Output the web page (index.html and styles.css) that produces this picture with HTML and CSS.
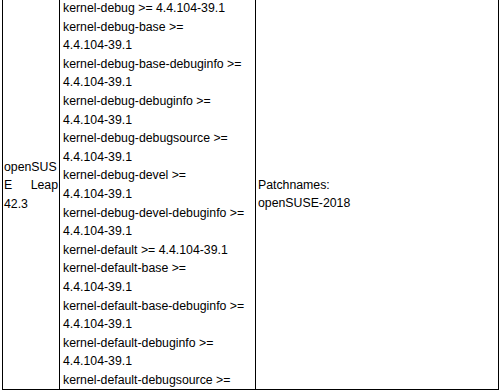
FILE: index.html
```html
<!DOCTYPE html>
<html lang="en">
<head>
<meta charset="utf-8">
<title>Packages</title>
<link rel="stylesheet" href="styles.css">
</head>
<body>
<div class="sheet">
  <div class="cell product"><div class="product-text">openSUSE Leap 42.3</div></div>
  <div class="cell packages">
    <div class="pkg">kernel-debug &gt;= <span class="ver">4.4.104-39.1</span></div>
    <div class="pkg">kernel-debug-base &gt;= <span class="ver">4.4.104-39.1</span></div>
    <div class="pkg">kernel-debug-base-debuginfo &gt;= <span class="ver">4.4.104-39.1</span></div>
    <div class="pkg">kernel-debug-debuginfo &gt;= <span class="ver">4.4.104-39.1</span></div>
    <div class="pkg">kernel-debug-debugsource &gt;= <span class="ver">4.4.104-39.1</span></div>
    <div class="pkg">kernel-debug-devel &gt;= <span class="ver">4.4.104-39.1</span></div>
    <div class="pkg">kernel-debug-devel-debuginfo &gt;= <span class="ver">4.4.104-39.1</span></div>
    <div class="pkg">kernel-default &gt;= <span class="ver">4.4.104-39.1</span></div>
    <div class="pkg">kernel-default-base &gt;= <span class="ver">4.4.104-39.1</span></div>
    <div class="pkg">kernel-default-base-debuginfo &gt;= <span class="ver">4.4.104-39.1</span></div>
    <div class="pkg">kernel-default-debuginfo &gt;= <span class="ver">4.4.104-39.1</span></div>
    <div class="pkg">kernel-default-debugsource &gt;=</div>
  </div>
  <div class="cell patches"><div>Patchnames:<br>openSUSE-2018</div></div>
</div>
</body>
</html>
```

FILE: styles.css
```css
html, body {
  margin: 0;
  padding: 0;
  background: #fff;
  overflow: hidden;
}

body {
  font-family: "Liberation Sans", Arial, sans-serif;
  font-size: 12.3px;
  line-height: 18.6px;
  color: #000;
}

.sheet {
  display: grid;
  grid-template-columns: 57px 196px 243px;
  width: 497px;
  margin: -2px 0 0 2px;
  border-left: 1px solid #000;
  border-top: 1px solid #000;
  box-sizing: border-box;
}

.cell {
  display: flex;
  align-items: center;
  border-right: 1px solid #000;
  border-bottom: 1px solid #000;
  box-sizing: border-box;
  min-width: 0;
}

.product {
  padding: 0 1px 17px 1px;
}

.product-text {
  width: 100%;
  text-align: justify;
  overflow-wrap: anywhere;
}

.packages {
  display: block;
  padding: 0 2px 0 3px;
}

.ver {
  white-space: nowrap;
}

.patches {
  padding: 0 2px;
}
```
